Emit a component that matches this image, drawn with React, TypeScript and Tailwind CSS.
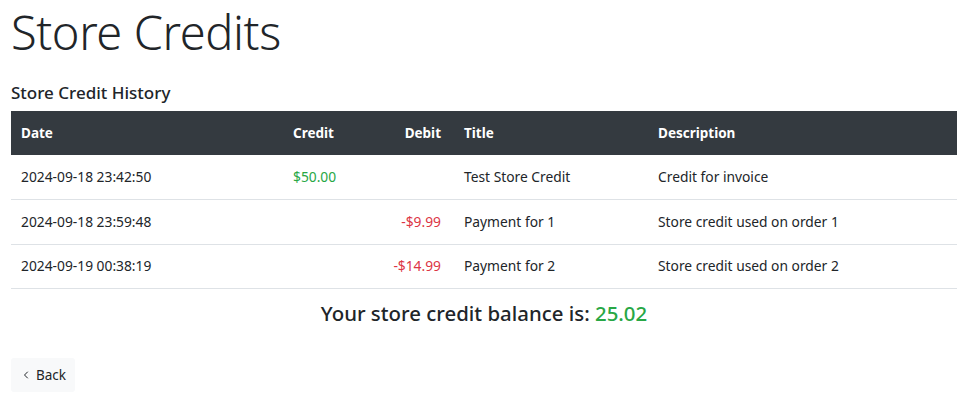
import { ChevronLeft } from "lucide-react";

const rows = [
  { date: "2024-09-18 23:42:50", credit: "$50.00", debit: "", title: "Test Store Credit", desc: "Credit for invoice" },
  { date: "2024-09-18 23:59:48", credit: "", debit: "-$9.99", title: "Payment for 1", desc: "Store credit used on order 1" },
  { date: "2024-09-19 00:38:19", credit: "", debit: "-$14.99", title: "Payment for 2", desc: "Store credit used on order 2" },
];

export default function App() {
  return (
    <div className="min-h-screen bg-white pl-[11px] pr-[8px] text-[14px] leading-[1.5] text-[#212529] font-['Noto_Sans',sans-serif]">
      <h1 className="pt-[3px] text-[47px] font-light leading-[1.25] tracking-[-0.4px]">Store Credits</h1>

      <h5 className="mt-[21px] mb-[8px] text-[17px] font-medium leading-[1.2]">Store Credit History</h5>

      <table className="w-full border-collapse table-fixed">
        <colgroup>
          <col className="w-[272px]" />
          <col className="w-[85px]" />
          <col className="w-[86px]" />
          <col className="w-[194px]" />
          <col />
        </colgroup>
        <thead>
          <tr className="bg-[#343a40] text-white">
            <th className="h-[44px] px-[10px] text-left text-[13.5px] font-bold">Date</th>
            <th className="px-[10px] text-left text-[13.5px] font-bold">Credit</th>
            <th className="pl-[10px] pr-[13px] text-right text-[13.5px] font-bold">Debit</th>
            <th className="px-[10px] text-left text-[13.5px] font-bold">Title</th>
            <th className="px-[10px] text-left text-[13.5px] font-bold">Description</th>
          </tr>
        </thead>
        <tbody>
          {rows.map((r) => (
            <tr key={r.date} className="border-b border-[#dee2e6]">
              <td className="h-[44.5px] px-[10px] text-[13.8px]">{r.date}</td>
              <td className="px-[10px] text-[13.8px] text-[#28a745]">{r.credit}</td>
              <td className="pl-[10px] pr-[13px] text-right text-[13.8px] text-[#dc3545]">{r.debit}</td>
              <td className="px-[10px] text-[13.8px]">{r.title}</td>
              <td className="px-[10px] text-[13.8px]">{r.desc}</td>
            </tr>
          ))}
        </tbody>
      </table>

      <p className="mt-[12px] text-center text-[20.4px] font-medium leading-[1.2]">
        Your store credit balance is: <span className="text-[#28a745]">25.02</span>
      </p>

      <button className="mt-[32px] flex h-[34px] items-center gap-[4px] rounded-[3px] bg-[#f8f9fa] px-[9px] text-[13.5px] text-[#212529]">
        <ChevronLeft size={12} strokeWidth={2} />
        Back
      </button>
    </div>
  );
}
